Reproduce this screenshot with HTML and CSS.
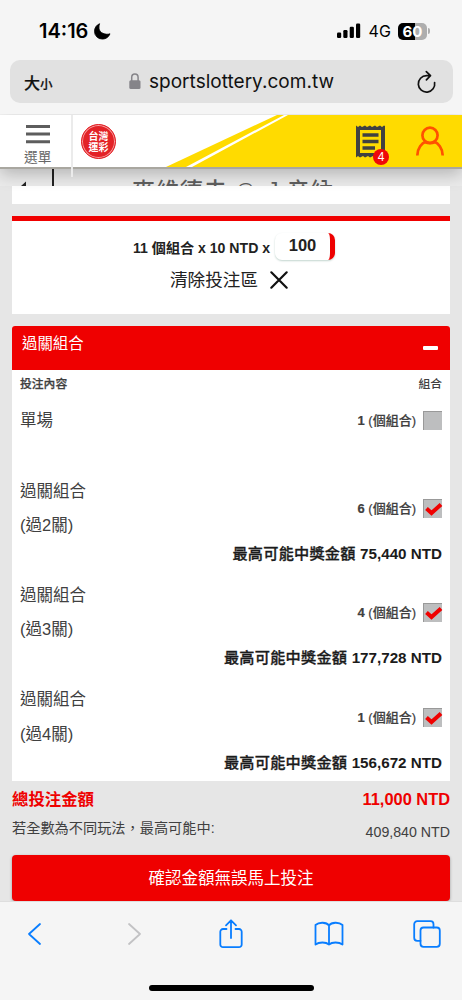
FILE: index.html
```html
<!DOCTYPE html>
<html lang="zh-Hant">
<head>
<meta charset="utf-8">
<title>台灣運彩</title>
<link rel="stylesheet" href="styles.css">
</head>
<body>
<div class="phone">
  <div class="status">
    <span class="clock">14:16</span>
    <svg class="moon" width="17" height="17" viewBox="0 0 17 17"><path d="M5.600.7C2.400 2 .4 5 .5 8.500A7.900 7.600 0 0 0 8.500 16.100C12 16.100 15 13.800 16 10.800C12 12.300 5.200 10 5 5.300C4.900 3.300 5 2.300 5.600.7Z" stroke="#000" stroke-width=".8" stroke-linejoin="round"/></svg>
    <svg class="signal" width="24" height="16" viewBox="0 0 24 16"><rect x="0" y="9.500" width="4.200" height="5.500" rx="1.200"/><rect x="6.300" y="7" width="4.200" height="8" rx="1.200"/><rect x="12.700" y="3.800" width="4.200" height="11.200" rx="1.200"/><rect x="19" y="0.500" width="4.200" height="14.500" rx="1.200"/></svg>
    <span class="network">4G</span>
    <span class="battery">60</span><i class="battery-tip"></i>
  </div>

  <div class="address">
    <span class="aa">大<small>小</small></span>
    <span class="domain">
      <svg class="lock" width="12" height="17" viewBox="0 0 12 17"><rect x=".3" y="7.300" width="11.200" height="8.700" rx="1.500" fill="#858489"/><path d="M2.700 8V4.500a3.200 3.400 0 0 1 6.400 0V8" fill="none" stroke="#858489" stroke-width="1.500"/></svg>
      sportslottery.com.tw</span>
    <svg class="reload" width="20" height="24" viewBox="0 0 20 24" fill="none" stroke="#111" stroke-width="1.700" stroke-linecap="round" stroke-linejoin="round"><path d="M17.600 12.500A8.200 8.200 0 1 1 9.500 5.700H13.400M9.300 1.600L13.500 5.700L9.400 9.800"/></svg>
  </div>

  <header class="site">
    <div class="menu">
      <svg width="24" height="19" viewBox="0 0 24 19" stroke="#5d5d5d" stroke-width="3"><path d="M0 1.500H24M0 9H24M0 16.700H24"/></svg>
      <span>選單</span>
    </div>
    <div class="banner">
      <svg class="sweep" width="389" height="52" viewBox="0 0 389 52"><path d="M93 52L204 0H389V52Z" fill="#ffdb00"/><path d="M113 52L211 0H215L119 52Z" fill="#fff"/></svg>
      <div class="logo"><span>台灣</span><span>運彩</span></div>
      <div class="slip">
        <svg width="30" height="34" viewBox="0 0 30 34"><path d="M0 .5l2 1.500 2-1.500 2 1.500 3-1.500 2 1.500 3-1.500 2 1.500 3-1.500 2 1.500 3-1.500 2 1.500 2-1.500 1 .5V32l-2-1-3 1.500-2-1.500-3 1.500-2-1.500-3 1.500-2-1.500-3 1.500-2-1.500-3 1.500-2-1.500L0 32.500Z" fill="#414141"/><path d="M4 5H25V28H4Z" fill="#ffdb00"/><path d="M6.500 10H22.500M6.500 16.500H22.500M6.500 23H19" stroke="#414141" stroke-width="3.400"/></svg>
        <b class="badge">4</b>
      </div>
      <svg class="user" width="30" height="30" viewBox="0 0 30 30" fill="none" stroke="#ff5200" stroke-width="2.700"><circle cx="15" cy="9.300" r="7.600"/><path d="M2.300 29.500C2.300 22 7.200 16.900 10.600 15.800M27.700 29.500C27.700 22 22.800 16.900 19.400 15.800M10 16.200Q15 18.300 20 16.200"/></svg>
    </div>
  </header>

  <main>
    <div class="match">
      <div class="back"><svg width="10" height="6" viewBox="0 0 10 6"><path d="M0 5L5 .5V5Z" fill="#222"/></svg></div>
      <span class="home">麥維德夫</span><span class="at">@</span><span class="away">J.辛納</span>
    </div>
    <div class="blank"></div>

    <section class="stake">
      <div class="amount"><b>11 個組合 x 10 NTD x</b><span class="input">100</span></div>
      <div class="clear">清除投注區
        <svg width="18" height="18" viewBox="0 0 18 18" stroke="#111" stroke-width="2.200" stroke-linecap="round"><path d="M1.300 1.300L16.700 16.700M16.700 1.300L1.300 16.700"/></svg>
      </div>
    </section>

    <section class="combos">
      <h2>過關組合<i></i></h2>
      <div class="head"><b>投注內容</b><span>組合</span></div>
      <div class="single"><span>單場</span><div class="pick"><span><b>1</b> (個組合)</span><i class="box"></i></div></div>
      <div class="combo">
        <div class="line"><div class="name">過關組合<br>(過2關)</div><div class="pick"><span><b>6</b> (個組合)</span><i class="box"><svg width="18" height="18" viewBox="0 0 18 18"><path d="M2.500 8.500L7.500 13L17 4.500" /></svg></i></div></div>
        <div class="prize">最高可能中獎金額 <b>75,440 NTD</b></div>
      </div>
      <div class="combo">
        <div class="line"><div class="name">過關組合<br>(過3關)</div><div class="pick"><span><b>4</b> (個組合)</span><i class="box"><svg width="18" height="18" viewBox="0 0 18 18"><path d="M2.500 8.500L7.500 13L17 4.500" /></svg></i></div></div>
        <div class="prize">最高可能中獎金額 <b>177,728 NTD</b></div>
      </div>
      <div class="combo">
        <div class="line"><div class="name">過關組合<br>(過4關)</div><div class="pick"><span><b>1</b> (個組合)</span><i class="box"><svg width="18" height="18" viewBox="0 0 18 18"><path d="M2.500 8.500L7.500 13L17 4.500" /></svg></i></div></div>
        <div class="prize">最高可能中獎金額 <b>156,672 NTD</b></div>
      </div>
    </section>

    <div class="total"><span>總投注金額</span><b>11,000 NTD</b></div>
    <div class="maximum"><span>若全數為不同玩法，最高可能中:</span><em>409,840 NTD</em></div>
    <div class="submit">確認金額無誤馬上投注</div>
  </main>

  <footer>
    <nav>
      <svg width="14" height="24" viewBox="0 0 14 24" stroke="#087dff"><path d="M12 2L1 12L12 22"/></svg>
      <svg width="14" height="24" viewBox="0 0 14 24" stroke="#c2c2c4"><path d="M3 2L14 12L3 22"/></svg>
      <svg width="24" height="30" viewBox="0 0 24 30" stroke="#087dff"><path d="M7.500 10H4A2.700 2.700 0 0 0 1.300 12.700V25.500A2.700 2.700 0 0 0 4 28.200H20A2.700 2.700 0 0 0 22.700 25.500V12.700A2.700 2.700 0 0 0 20 10H16.500M12 19V1.500M7 6.300L12 1.300L17 6.300"/></svg>
      <svg width="30" height="26" viewBox="0 0 30 26" stroke="#087dff"><path d="M15 4.500C12.500 1 5 .8 1.500 4V23.500C5 20.800 12 20.800 15 23.500C18 20.800 25 20.800 28.500 23.500V4C25 .8 17.500 1 15 4.500V23.500"/></svg>
      <svg width="28" height="28" viewBox="0 0 28 28" stroke="#087dff"><rect x="7.500" y="7.500" width="19.300" height="19.300" rx="3"/><path d="M7.500 20.800H4.200A3 3 0 0 1 1.200 17.800V4.200A3 3 0 0 1 4.200 1.200H17.500A3 3 0 0 1 20.500 4.200V7.500"/></svg>
    </nav>
    <div class="indicator"></div>
  </footer>
</div>
</body>
</html>
```
FILE: styles.css
```css
* { box-sizing: border-box; }
body { margin: 0; background: #f5f5f5; font-family: "Liberation Sans", "Noto Sans CJK TC", sans-serif; color: #404040; }
svg { display: block; flex: none; overflow: visible; }
i, em { font-style: normal; }
.phone { width: 462px; height: 1000px; display: flex; flex-direction: column; overflow: hidden; white-space: nowrap; }

.status { height: 60px; flex: none; display: flex; align-items: center; padding: 2px 32px 0 39px; font-family: Inter, sans-serif; color: #000; }
.clock { font-size: 20px; font-weight: 600; width: 56px; letter-spacing: 0; }
.signal { margin-left: 226px; }
.network { font-size: 16px; margin-left: 8px; width: 30px; }
.battery { width: 30px; height: 17px; border-radius: 5px; background: linear-gradient(90deg, #000 60%, #aeaeae 60%); color: #fff; font-size: 15px; font-weight: 700; line-height: 17px; text-align: center; }
.battery-tip { width: 2px; height: 6px; margin-left: 1px; border-radius: 0 2px 2px 0; background: #aeaeae; }

.address { height: 43px; flex: none; margin: 0 9px 0 10px; padding: 0 16px 0 14px; border-radius: 10px; background: #e1e1e1; display: flex; align-items: center; justify-content: space-between; color: #111; }
.aa { width: 35px; font: 500 16px "Noto Sans CJK TC", sans-serif; -webkit-text-stroke: .2px #111; }
.aa small { font-size: 12.500px; }
.domain { display: flex; align-items: center; gap: 8px; margin-right: 13px; font: 19px Inter, sans-serif; letter-spacing: .02px; }

.site { height: 54px; flex: none; margin-top: 12px; display: flex; background: #fff; border-bottom: 2px solid #a9a7a0; position: relative; z-index: 2; box-shadow: 0 5px 16px rgba(0,0,0,.24); clip-path: inset(-1px 0 -30px 0); }
.menu { width: 73px; height: 62px; flex: none; border-right: 2px solid #ebebeb; padding: 10px 0 0 24px; font-size: 13.700px; line-height: 20px; color: #666; }
.menu svg { margin-left: 2px; }
.menu span { display: block; margin-top: 4px; }
.banner { width: 389px; height: 52px; display: grid; grid-template-columns: 284px 60px 30px; align-items: start; background: #fff; }
.sweep, .logo, .slip, .user { grid-row: 1; }
.sweep { grid-column: 1; height: 52px; }
.logo { grid-column: 1; z-index: 1; width: 35px; height: 35px; margin: 9px 0 0 8px; border-radius: 50%; border: 1px solid #e32227; background: #e32227; box-shadow: inset 0 0 0 1px #f8a0a0; color: #fff; display: flex; flex-direction: column; align-items: center; justify-content: center; }
.logo span { height: 10.500px; font: 700 10px/10.500px "Noto Sans CJK TC", sans-serif; }
.slip { grid-column: 2; position: relative; margin: 10px 0 0 -1px; z-index: 1; }
.badge { position: absolute; left: 17px; top: 24px; width: 16px; height: 16px; border-radius: 50%; background: #ef0909; color: #fff; font: 12px/16px "Liberation Sans", sans-serif; text-align: center; }
.user { grid-column: 3; margin: 11px 0 0 -2px; z-index: 1; }

main { height: 732px; flex: none; padding: 0 12px; background: #e6e6e6; overflow: hidden; }
.match { height: 17px; margin: 0 -12px; background: #ebebeb; overflow: hidden; display: flex; align-items: flex-start; font-size: 23px; line-height: 36px; letter-spacing: .9px; font-weight: 500; color: #5e5e5e; padding-top: 4px; }
.back { width: 54px; height: 17px; flex: none; margin-top: -4px; padding: 12px 0 0 21px; border-right: 2px solid #222; }
.home { width: 104px; margin-left: 78px; }
.at { font-size: 18px; width: 31px; line-height: 35px; }
.blank { height: 18px; background: #fff; }

.stake { height: 98px; margin-top: 12px; border-top: 5px solid #f00000; background: #fff; padding-top: 12px; color: #222; }
.amount { display: flex; justify-content: center; height: 27px; line-height: 29px; font-size: 14.100px; gap: 5px; padding-left: 6px; }
.amount b { font-weight: 700; line-height: 30px; width: 137px; }
.input { width: 60px; height: 27px; border-radius: 7px; border-right: 5px solid #ee0000; font-size: 16.500px; font-weight: 700; line-height: 25px; text-align: center; box-shadow: 0 1px 2px #c3d5cf; }
.clear { display: flex; justify-content: center; align-items: center; gap: 12px; font-size: 17.600px; line-height: 26px; height: 26px; margin-top: 7px; padding-right: 4px; }

.combos { height: 455px; margin-top: 12px; background: #fff; border-radius: 3px 3px 0 0; }
h2 { height: 44px; margin: 0; padding: 6px 12px 0 10px; border-radius: 3px 3px 0 0; background: #ef0000; color: #fff; font-size: 15.400px; line-height: 23px; font-weight: 400; display: flex; justify-content: space-between; }
h2 i { width: 15px; height: 4px; margin-top: 14px; border-radius: 1px; background: #fff; }
.head { display: flex; justify-content: space-between; padding: 0 8px; font-size: 11.800px; line-height: 28px; height: 28px; font-weight: 500; }
.head b { font-weight: 500; -webkit-text-stroke: .25px #404040; }
.single { height: 77px; display: flex; justify-content: space-between; align-items: flex-start; padding: 10px 8px 0; font-size: 16.500px; line-height: 24px; }
.single .pick { margin-top: 3px; }
.pick { display: flex; align-items: center; gap: 7px; font-size: 13px; line-height: 19px; }
.pick span { font-weight: 500; -webkit-text-stroke: .2px #404040; }
.box { width: 19px; height: 19px; background: #bdbebf; border-left: 1px solid #999; border-top: 1px solid #999; }
.box path { fill: none; stroke: #f00000; stroke-width: 4; }
.combo { height: 104.300px; padding: 0 8px; }
.line { height: 70px; display: flex; justify-content: space-between; align-items: center; }
.name { font-size: 16.500px; line-height: 34.500px; margin-top: -4px; }
.line .pick { margin-top: -3px; }
.prize { text-align: right; font-size: 15.200px; line-height: 24px; margin-top: -3px; font-weight: 500; letter-spacing: .22px; color: #1b1b1b; -webkit-text-stroke: .3px #1b1b1b; }
.prize b { font-weight: 700; letter-spacing: 0; -webkit-text-stroke: 0; }

.total { display: flex; justify-content: space-between; height: 36px; line-height: 36px; color: #ef0000; font-size: 16.400px; font-weight: 700; }
.maximum { display: flex; justify-content: space-between; height: 38px; font-size: 14.200px; line-height: 22px; }
.maximum em { margin-top: 4px; }
.submit { height: 46px; border-radius: 4px; background: #ef0000; color: #fff; font-size: 16.500px; line-height: 47px; text-align: center; box-shadow: 0 1px 3px #9a9a9a; }

footer { height: 99px; flex: none; background: #f5f5f5; border-top: 1px solid #dedede; position: relative; z-index: 3; }
nav { height: 64px; margin: 0 -14px; display: grid; grid-template-columns: repeat(5, 98px); justify-items: center; align-items: center; }
nav path, nav rect { fill: none; stroke-width: 1.800; stroke-linecap: round; stroke-linejoin: round; }
.indicator { width: 165px; height: 6px; border-radius: 3px; background: #000; margin: 19px auto 0; }
```
